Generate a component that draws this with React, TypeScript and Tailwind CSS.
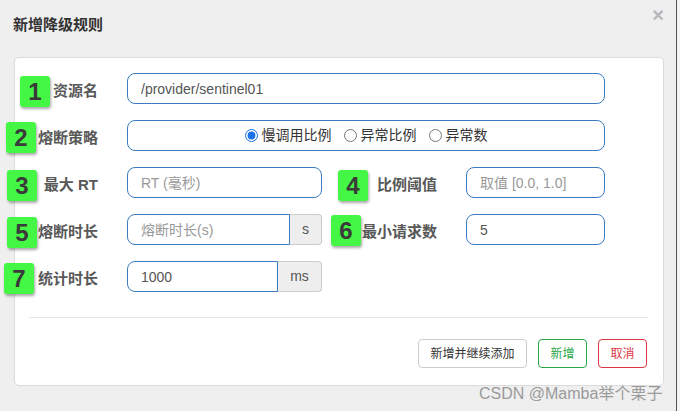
import React from "react";

const font = { fontFamily: '"Liberation Sans", "Noto Sans CJK SC", sans-serif' };

function Badge({ n, className }: { n: string; className: string }) {
  return (
    <div
      className={`absolute w-[30px] h-[31px] rounded-[3px] bg-[#44f744] shadow-[1px_2px_3px_rgba(0,0,0,0.35)] flex items-center justify-center text-[24px] font-bold text-[#3a3a3a] leading-none z-10 ${className}`}
    >
      {n}
    </div>
  );
}

function Label({ text, w }: { text: string; w: string }) {
  return (
    <div className={`${w} shrink-0 pr-[29px] pt-[3px] text-right text-[15px] font-bold text-[#585858] leading-none`}>{text}</div>
  );
}

const inputCls =
  "h-[31px] border border-[#3c7cc0] rounded-[8px] bg-white px-[13px] text-[14px] text-[#555] outline-none placeholder:text-[#999]";

export default function App() {
  return (
    <div className="w-[680px] h-[411px] bg-[#efefef] relative flex overflow-hidden" style={font}>
      <div className="w-[676px] h-full relative">
        <div className="h-[50px] flex items-center justify-between pl-[13px] pr-[12px]">
          <div className="text-[15px] font-bold text-[#333] pt-[1px]">新增降级规则</div>
          <div className="text-[20px] font-bold text-[#b8b8b8] leading-none -mt-[20px]">×</div>
        </div>
        <div className="ml-[14px] mt-[7px] w-[650px] bg-white border border-[#dcdcdc] rounded-[5px] pt-[15px] pb-[17px]">
          <div className="flex flex-col gap-[16px]">
            <div className="relative flex items-center">
              <Badge n="1" className="left-[5px] top-[3px]" />
              <Label text="资源名" w="w-[112px]" />
              <input className={`${inputCls} w-[478px]`} defaultValue="/provider/sentinel01" style={font} />
            </div>
            <div className="relative flex items-center">
              <Badge n="2" className="-left-[9px] top-[2px]" />
              <Label text="熔断策略" w="w-[112px]" />
              <div className="w-[478px] h-[31px] border border-[#3c7cc0] rounded-[8px] flex items-center justify-center text-[14px] text-[#333]">
                <label className="flex items-center gap-[4px] mr-[12px]">
                  <input type="radio" name="s" defaultChecked className="w-[13px] h-[13px] m-0 accent-[#1a73e8]" />
                  <span>慢调用比例</span>
                </label>
                <label className="flex items-center gap-[4px] mr-[12px]">
                  <input type="radio" name="s" className="w-[13px] h-[13px] m-0" />
                  <span>异常比例</span>
                </label>
                <label className="flex items-center gap-[4px]">
                  <input type="radio" name="s" className="w-[13px] h-[13px] m-0" />
                  <span>异常数</span>
                </label>
              </div>
            </div>
            <div className="relative flex items-center">
              <Badge n="3" className="-left-[8px] top-[3px]" />
              <Badge n="4" className="left-[323px] top-[3px]" />
              <Label text="最大 RT" w="w-[112px]" />
              <input className={`${inputCls} w-[195px]`} placeholder="RT (毫秒)" style={font} />
              <Label text="比例阈值" w="w-[144px]" />
              <input className={`${inputCls} w-[139px]`} placeholder="取值 [0.0, 1.0]" style={font} />
            </div>
            <div className="relative flex items-center">
              <Badge n="5" className="-left-[8px] top-[3px]" />
              <Badge n="6" className="left-[316px] top-[1px]" />
              <Label text="熔断时长" w="w-[112px]" />
              <div className="w-[195px] flex">
                <input className={`${inputCls} w-[163px] rounded-r-none`} placeholder="熔断时长(s)" style={font} />
                <div className="w-[32px] h-[31px] bg-[#eeeeee] border border-l-0 border-[#ccc] rounded-r-[4px] flex items-center justify-center text-[14px] text-[#555]">
                  s
                </div>
              </div>
              <Label text="最小请求数" w="w-[144px]" />
              <input className={`${inputCls} w-[139px]`} defaultValue="5" style={font} />
            </div>
            <div className="relative flex items-center">
              <Badge n="7" className="-left-[11px] top-[2px]" />
              <Label text="统计时长" w="w-[112px]" />
              <div className="w-[195px] flex">
                <input className={`${inputCls} w-[151px] rounded-r-none`} defaultValue="1000" style={font} />
                <div className="w-[44px] h-[31px] bg-[#eeeeee] border border-l-0 border-[#ccc] rounded-r-[4px] flex items-center justify-center text-[14px] text-[#555]">
                  ms
                </div>
              </div>
            </div>
          </div>
          <div className="mt-[25px] ml-[14px] mr-[15px] h-px bg-[#e5e5e5]" />
          <div className="mt-[21px] pr-[16px] flex justify-end gap-[11px] text-[12px]">
            <button className="h-[29px] w-[109px] border border-[#ccc] rounded-[4px] bg-white text-[#333]">新增并继续添加</button>
            <button className="h-[29px] w-[49px] border border-[#28a745] rounded-[4px] bg-white text-[#28a745]">新增</button>
            <button className="h-[29px] w-[49px] border border-[#dc3545] rounded-[4px] bg-white text-[#dc3545]">取消</button>
          </div>
        </div>
        <div className="absolute left-[479px] top-[385px] text-[16px] text-[#9b9b9b] leading-[18px] whitespace-nowrap">
          CSDN @Mamba举个栗子
        </div>
      </div>
      <div className="w-[4px] h-full border-l border-[#555] bg-[#f4f4f4]" />
    </div>
  );
}
